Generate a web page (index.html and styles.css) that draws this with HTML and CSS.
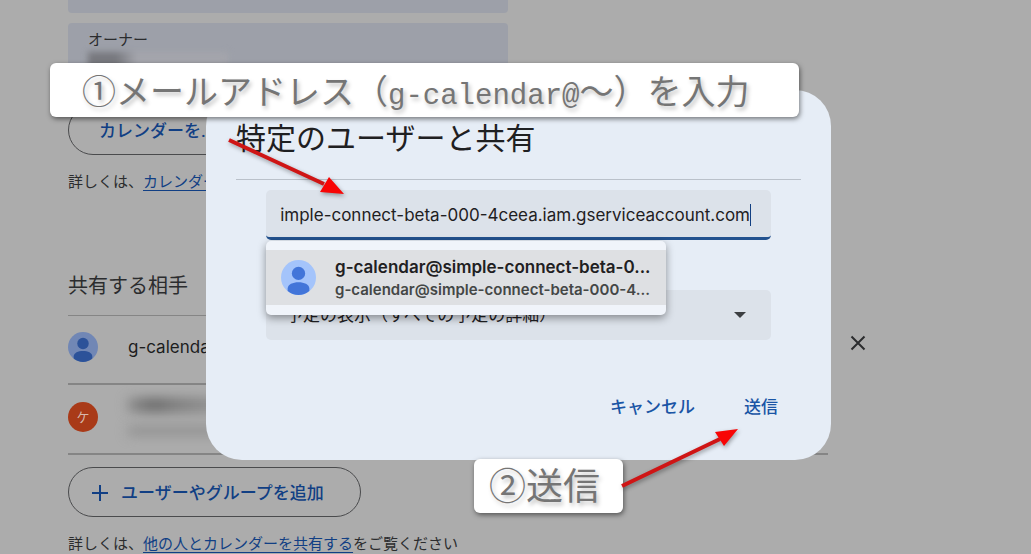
FILE: index.html
```html
<!DOCTYPE html>
<html lang="ja">
<head>
<meta charset="utf-8">
<title>特定のユーザーと共有</title>
<link rel="stylesheet" href="styles.css">
</head>
<body>
<main class="page">
  <div class="card card-previous"></div>
  <section class="card card-owner">
    <div class="card-label">オーナー</div>
    <div class="owner-name"></div>
  </section>
  <button class="pill pill-more" type="button">カレンダーを...</button>
  <p class="help">詳しくは、<a href="#">カレンダー</a></p>

  <h2 class="section-title">共有する相手</h2>
  <ul class="people">
    <li class="row">
      <div class="person">
        <svg class="avatar avatar-dim" viewBox="0 0 30 30" aria-hidden="true">
          <circle class="disc" cx="15" cy="15" r="15"/>
          <circle class="figure" cx="15" cy="11.500" r="5.700"/>
          <path class="figure" d="M5.700 26.500v-2c0-3.700 4.500-5.500 9.300-5.500s9.300 1.800 9.300 5.500v2A15 15 0 0 1 15 30a15 15 0 0 1-9.300-3.500z"/>
        </svg>
        <span>g-calendar</span>
      </div>
      <button class="remove" type="button" aria-label="削除">
        <svg viewBox="0 0 16 16" width="16" height="16" aria-hidden="true"><path d="M1.500 1.500l13 13M14.500 1.500l-13 13"/></svg>
      </button>
    </li>
    <li class="row">
      <div class="person">
        <span class="avatar avatar-letter">ケ</span>
        <span class="redacted"><span class="smudge smudge-name"></span><span class="smudge smudge-mail"></span></span>
      </div>
    </li>
  </ul>
  <button class="pill pill-add" type="button">
    <svg viewBox="0 0 16 16" width="16" height="16" aria-hidden="true"><path d="M8 0v16M0 8h16"/></svg>
    ユーザーやグループを追加
  </button>
  <p class="help">詳しくは、<a href="#">他の人とカレンダーを共有する</a>をご覧ください</p>
</main>

<div class="overlay">
  <form class="dialog" role="dialog" aria-labelledby="dialog-title">
    <h1 class="dialog-title" id="dialog-title">特定のユーザーと共有</h1>
    <div class="fields">
      <div class="combo">
        <div class="field field-active">
          <input class="address" type="text" aria-label="メールアドレス" value="imple-connect-beta-000-4ceea.iam.gserviceaccount.com">
          <span class="caret"></span>
        </div>
        <div class="suggestions">
          <button class="suggestion" type="button">
            <svg class="avatar" viewBox="0 0 30 30" aria-hidden="true">
              <circle class="disc" cx="15" cy="15" r="15"/>
              <circle class="figure" cx="15" cy="11.500" r="5.700"/>
              <path class="figure" d="M5.700 26.500v-2c0-3.700 4.500-5.500 9.300-5.500s9.300 1.800 9.300 5.500v2A15 15 0 0 1 15 30a15 15 0 0 1-9.300-3.500z"/>
            </svg>
            <span class="suggestion-text">
              <span class="suggestion-name">g-calendar@simple-connect-beta-0...</span>
              <span class="suggestion-mail">g-calendar@simple-connect-beta-000-4...</span>
            </span>
          </button>
        </div>
      </div>
      <div class="field field-select">
        <select class="permission" aria-label="権限">
          <option>予定の表示（すべての予定の詳細）</option>
        </select>
        <svg class="arrow-down" viewBox="0 0 12 6" width="12" height="6" aria-hidden="true"><path d="M0 0h12L6 6z"/></svg>
      </div>
    </div>
    <div class="actions">
      <button class="action" type="button">キャンセル</button>
      <button class="action" type="button">送信</button>
    </div>
  </form>
</div>

<div class="callout callout-address"><span>①メールアドレス（<span class="latin">g-calendar@</span>～）を入力</span></div>
<div class="callout callout-send">②送信</div>
<svg class="arrows" viewBox="0 0 1031 554" width="1031" height="554" aria-hidden="true">
  <path class="shaft" d="M229 140L324 184M622 486L720 439"/>
  <path class="head" d="M344 194L320 192L329 177zM738 429L715 432L724 446z"/>
</svg>
</body>
</html>
```
FILE: styles.css
```css
* {
  box-sizing: border-box;
}

body {
  position: relative;
  margin: 0;
  min-height: 100vh;
  overflow: hidden;
  background: #acacac;
  color: #2b2c2e;
  font-family: Roboto, "Noto Sans CJK JP", sans-serif;
  font-size: 15px;
  line-height: 24px;
}

button,
input,
select {
  font: inherit;
  color: inherit;
  border: 0;
  padding: 0;
  margin: 0;
  background: none;
}

.page {
  padding-left: 68px;
}

.card {
  width: 440px;
  max-width: 100%;
  background: #9da0a9;
  border-radius: 4px;
}

.card-previous {
  height: 13px;
  border-radius: 0 0 4px 4px;
  margin-bottom: 10px;
}

.card-owner {
  height: 70px;
  padding: 5px 20px;
  margin-bottom: 12px;
}

.owner-name {
  width: 140px;
  height: 20px;
  background: linear-gradient(90deg, #77787e 20%, #a4a5ac 35%);
  filter: blur(3px);
}

.pill {
  display: flex;
  align-items: center;
  gap: 13px;
  height: 50px;
  padding: 2px 30px 0;
  border: 1px solid #4a4b4d;
  border-radius: 25px;
  color: #113f84;
  font-size: 17px;
  font-weight: 500;
}

.pill-more {
  min-width: 220px;
}

.pill-add {
  padding: 2px 36px 0 23px;
  margin-top: 12px;
}

.pill svg {
  fill: none;
  stroke: #113f84;
  stroke-width: 2;
}

.help {
  margin: 15px 0 0;
}

.help a {
  color: #113f84;
  text-underline-offset: 3px;
}

.section-title {
  margin: 76px 0 0;
  font-size: 20px;
  font-weight: 400;
  line-height: 32px;
}

.people {
  list-style: none;
  margin: 13px 0 0;
  padding: 0;
}

.row {
  display: flex;
  align-items: center;
  gap: 22px;
}

.person {
  display: flex;
  align-items: center;
  gap: 30px;
  flex: 0 1 760px;
  height: 70px;
  padding-bottom: 4px;
  border-bottom: 2px solid #858585;
  color: #1c1d1e;
  font-family: Inter, "Noto Sans CJK JP", sans-serif;
  font-size: 17px;
}

.row:first-child .person {
  border-top: 1px solid #858585;
  padding-bottom: 6px;
}

.avatar {
  flex: none;
  width: 30px;
  height: 30px;
}

.disc {
  fill: #a4c4fb;
}

.figure {
  fill: #4275d9;
}

.avatar-dim .disc {
  fill: #7187b5;
}

.avatar-dim .figure {
  fill: #2c5299;
}

.avatar-letter {
  display: grid;
  place-items: center;
  border-radius: 50%;
  background: #a93a18;
  color: #d6b8ac;
  font-size: 13px;
}

.redacted {
  display: grid;
  gap: 14px;
}

.smudge {
  width: 100px;
  height: 10px;
  filter: blur(6px);
  background: #929292;
}

.smudge-name {
  height: 14px;
  background: linear-gradient(90deg, #8c8c8c, #686868 25%, #7c7c7c 50%, #959595);
}

.remove {
  display: grid;
  padding-bottom: 14px;
}

.remove svg {
  fill: none;
  stroke: #2b2c2e;
  stroke-width: 2;
}

.overlay {
  position: absolute;
  inset: 0;
  display: flex;
  justify-content: center;
  align-items: flex-start;
  padding: 90px 0 0 6px;
}

.dialog {
  width: 625px;
  max-width: 100%;
  padding: 27px 30px 41px;
  border-radius: 36px;
  background: #e6edf6;
  color: #1f2022;
}

.dialog-title {
  margin: 0;
  padding-bottom: 18px;
  border-bottom: 1px solid #bac1ca;
  font-size: 30px;
  font-weight: 400;
  line-height: 44px;
}

.fields {
  display: grid;
  gap: 50px;
  padding: 10px 30px 0;
}

.combo {
  position: relative;
}

.field {
  display: flex;
  align-items: center;
  height: 50px;
  padding: 0 20px;
  border-radius: 5px;
  background: #dce2ea;
}

.field-active {
  padding: 2px 20px 0 12px;
  border-bottom: 3px solid #23528f;
}

.address {
  flex: 1;
  min-width: 0;
  text-align: right;
  font-family: Inter, sans-serif;
  font-size: 17px;
  outline: 0;
}

.caret {
  width: 1px;
  height: 22px;
  background: #123f82;
}

.suggestions {
  position: absolute;
  top: 51px;
  left: 0;
  width: 400px;
  padding: 9px 0 10px;
  border-radius: 5px;
  background: #f0f4fa;
  box-shadow: 0 3px 8px rgba(0, 0, 0, .4);
}

.suggestion {
  display: flex;
  align-items: center;
  gap: 19px;
  width: 100%;
  height: 55px;
  padding: 0 15px;
  background: #dee0e3;
  text-align: left;
  font-family: Inter, sans-serif;
  font-weight: 600;
}

.suggestion .avatar {
  width: 35px;
  height: 35px;
}

.suggestion-text {
  display: grid;
  white-space: nowrap;
}

.suggestion-name {
  font-size: 17px;
}

.suggestion-mail {
  font-size: 15px;
  line-height: 22px;
  color: #444746;
}

.permission {
  flex: 1;
  appearance: none;
  font-size: 17px;
}

.arrow-down {
  margin-right: 5px;
  fill: #3c3f42;
}

.actions {
  display: flex;
  justify-content: flex-end;
  gap: 49px;
  padding: 55px 23px 0 0;
}

.action {
  color: #1a55a5;
  font-size: 17px;
  font-weight: 500;
}

.callout {
  position: absolute;
  display: flex;
  align-items: center;
  height: 54px;
  border-radius: 6px;
  background: #fff;
  box-shadow: 1px 2px 5px rgba(0, 0, 0, .5);
  color: #757575;
  font-family: "Noto Sans CJK JP", sans-serif;
  font-size: 34px;
  white-space: nowrap;
  text-shadow: 2px 3px 4px rgba(0, 0, 0, .25);
}

.callout-address {
  left: 50px;
  top: 63px;
  width: 749px;
  padding: 6px 0 0 32px;
}

.callout-send {
  left: 474px;
  top: 459px;
  width: 149px;
  padding: 0 0 4px 15px;
  font-size: 37px;
}

.latin {
  font-family: "Liberation Mono", monospace;
  font-size: 29px;
}

.arrows {
  position: absolute;
  left: 0;
  top: 0;
  pointer-events: none;
  filter: drop-shadow(1px 2px 2px rgba(0, 0, 0, .35));
}

.shaft {
  fill: none;
  stroke: #cf1515;
  stroke-width: 4;
}

.head {
  fill: #f80505;
}
```
